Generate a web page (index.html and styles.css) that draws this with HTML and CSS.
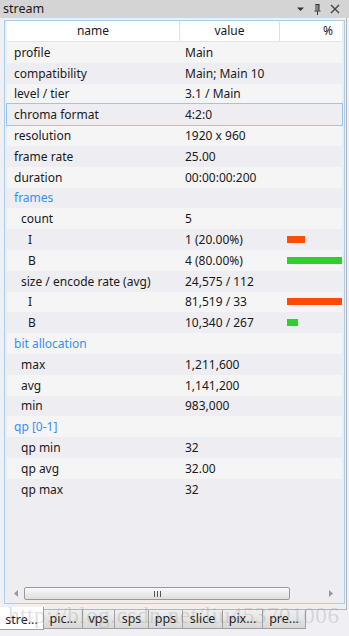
FILE: index.html
```html
<!DOCTYPE html>
<html lang="en">
  <head>
    <meta charset="UTF-8" />
    <title>stream</title>
    <link rel="stylesheet" href="styles.css">
  </head>
  <body>
    <div class="titlebar">
      <span class="title">stream</span>
      <div class="tools">
        <svg width="9" height="6" viewBox="0 0 9 6"><path d="M1 1.5h7L4.5 5z" fill="#333"/></svg>
        <svg width="7" height="11" viewBox="0 0 7 11"><path d="M1.5 0.5h4M2 0.5v6M5 0.5v6M0.5 7h6M3.5 7v4" stroke="#333" fill="none"/><path d="M4 1v5.5" stroke="#333"/></svg>
        <svg width="10" height="10" viewBox="0 0 10 10"><path d="M1 1l8 8M9 1l-8 8" stroke="#444" stroke-width="1.4"/></svg>
      </div>
    </div>

    <div class="pane">
      <div class="view">
        <div class="head">
          <div class="hname">name</div>
          <div class="hvalue">value</div>
          <div class="hpct">%</div>
        </div>

        <div class="rows">
          <div class="row"><div class="n">profile</div><div class="v">Main</div><div class="p"></div></div>
          <div class="row"><div class="n">compatibility</div><div class="v">Main; Main 10</div><div class="p"></div></div>
          <div class="row"><div class="n">level / tier</div><div class="v">3.1 / Main</div><div class="p"></div></div>
          <div class="row selected"><div class="n">chroma format</div><div class="v">4:2:0</div><div class="p"></div></div>
          <div class="row"><div class="n">resolution</div><div class="v">1920 x 960</div><div class="p"></div></div>
          <div class="row"><div class="n">frame rate</div><div class="v">25.00</div><div class="p"></div></div>
          <div class="row"><div class="n">duration</div><div class="v">00:00:00:200</div><div class="p"></div></div>
          <div class="row group"><div class="n">frames</div><div class="v"></div><div class="p"></div></div>
          <div class="row"><div class="n l1">count</div><div class="v">5</div><div class="p"></div></div>
          <div class="row"><div class="n l2">I</div><div class="v">1 (20.00%)</div><div class="p"><span class="bar red" style="width: 18px"></span></div></div>
          <div class="row"><div class="n l2">B</div><div class="v">4 (80.00%)</div><div class="p"><span class="bar green" style="width: 56px"></span></div></div>
          <div class="row"><div class="n l1">size / encode rate (avg)</div><div class="v">24,575 / 112</div><div class="p"></div></div>
          <div class="row"><div class="n l2">I</div><div class="v">81,519 / 33</div><div class="p"><span class="bar red" style="width: 56px"></span></div></div>
          <div class="row"><div class="n l2">B</div><div class="v">10,340 / 267</div><div class="p"><span class="bar green" style="width: 11px"></span></div></div>
          <div class="row group"><div class="n">bit allocation</div><div class="v"></div><div class="p"></div></div>
          <div class="row"><div class="n l1">max</div><div class="v">1,211,600</div><div class="p"></div></div>
          <div class="row"><div class="n l1">avg</div><div class="v">1,141,200</div><div class="p"></div></div>
          <div class="row"><div class="n l1">min</div><div class="v">983,000</div><div class="p"></div></div>
          <div class="row group"><div class="n">qp [0-1]</div><div class="v"></div><div class="p"></div></div>
          <div class="row"><div class="n l1">qp min</div><div class="v">32</div><div class="p"></div></div>
          <div class="row"><div class="n l1">qp avg</div><div class="v">32.00</div><div class="p"></div></div>
          <div class="row"><div class="n l1">qp max</div><div class="v">32</div><div class="p"></div></div>
        </div>

        <div class="hscroll">
          <svg class="arrow" width="4" height="7" viewBox="0 0 4 7"><path d="M4 0v7L0 3.5z" fill="#999"/></svg>
          <div class="thumb"><span class="grip"></span><span class="grip"></span><span class="grip"></span></div>
          <svg class="arrow" width="4" height="7" viewBox="0 0 4 7"><path d="M0 0v7l4-3.5z" fill="#999"/></svg>
        </div>
      </div>
    </div>

    <div class="tabs">
      <div class="tab active">stre...</div>
      <div class="tab w39">pic...</div>
      <div class="tab w32">vps</div>
      <div class="tab w34">sps</div>
      <div class="tab w34">pps</div>
      <div class="tab w40">slice</div>
      <div class="tab w40">pix...</div>
      <div class="tab w43">pre...</div>
    </div>

    <div class="watermark">http://blog.csdn.net/liu453701006</div>
  </body>
</html>
```

FILE: styles.css
```css
body {
  margin: 0;
  width: 349px;
  height: 636px;
  background-color: #f0eff4;
  font-family: 'Noto Sans', 'Open Sans', sans-serif;
  font-size: 12px;
  color: #1a1a1a;
  position: relative;
  overflow: hidden;
}
.titlebar {
  height: 18px;
  background-color: #d4d4d4;
  display: flex;
  align-items: center;
  justify-content: space-between;
  padding: 0 9px 0 3px;
}
.title {
  font-size: 12.5px;
  line-height: 18px;
}
.tools {
  display: flex;
  align-items: center;
  gap: 9px;
}
.pane {
  width: 347px;
  height: 592px;
  padding: 2px 2px 0 4px;
  box-sizing: border-box;
  border-right: 1px solid #b4b4b4;
  border-bottom: 1px solid #b4b4b4;
}
.view {
  width: 341px;
  height: 584px;
  box-sizing: border-box;
  border: 1px solid #a9cdeb;
  padding: 0 2px;
  background-color: #eeedf2;
  display: flex;
  flex-direction: column;
}
.head {
  display: flex;
  height: 20px;
  background-color: #fff;
  border-bottom: 1px solid #e3e3e3;
  line-height: 20px;
}
.hname {
  width: 172px;
  text-align: center;
  border-right: 1px solid #e0e0e0;
}
.hvalue {
  width: 99px;
  text-align: center;
  border-right: 1px solid #e0e0e0;
}
.hpct {
  flex: 1;
  text-align: right;
  padding-right: 9px;
}
.rows {
  flex: 1;
}
.row {
  display: flex;
  align-items: center;
  height: 20.8px;
}
.row:nth-child(odd) {
  background-color: #f5f5f6;
}
.row.selected {
  outline: 1px solid #99c8ee;
  outline-offset: 0;
}
.n {
  width: 166px;
  padding-left: 7px;
  white-space: nowrap;
}
.n.l1 {
  padding-left: 14px;
  width: 159px;
}
.n.l2 {
  padding-left: 21px;
  width: 152px;
}
.group .n {
  color: #3b8ef5;
}
.v {
  width: 95px;
  padding-left: 5px;
  white-space: nowrap;
}
.p {
  flex: 1;
  padding-left: 7px;
  display: flex;
  overflow: hidden;
}
.bar {
  display: block;
  height: 7px;
  flex-shrink: 0;
}
.bar.red {
  background-color: #ff4a0a;
}
.bar.green {
  background-color: #33cc33;
}
.hscroll {
  height: 17px;
  margin-bottom: 1px;
  display: flex;
  align-items: center;
  padding: 0 9px 0 7px;
  gap: 6px;
}
.hscroll .arrow {
  flex-shrink: 0;
}
.thumb {
  width: 266px;
  height: 13px;
  box-sizing: border-box;
  border: 1px solid #9a9a9a;
  border-radius: 2px;
  background: linear-gradient(#fafafa, #dedede);
  display: flex;
  justify-content: center;
  align-items: center;
  gap: 2px;
  margin-right: auto;
}
.grip {
  width: 1px;
  height: 6px;
  background-color: #555;
}
.tabs {
  display: flex;
  align-items: flex-start;
  height: 27px;
}
.tab {
  height: 19px;
  box-sizing: border-box;
  border: 1px solid #a0a0a0;
  border-top: none;
  border-left: none;
  background: linear-gradient(#f0f0f0, #d8d8d8);
  font-size: 12.5px;
  line-height: 18px;
  text-align: center;
}
.tab.active {
  width: 44px;
  height: 23px;
  margin-top: -3px;
  background: #fff;
  line-height: 25px;
}
.w32 { width: 32px; }
.w34 { width: 34px; }
.w39 { width: 39px; }
.w40 { width: 40px; }
.w43 { width: 43px; }
.watermark {
  position: absolute;
  left: 8px;
  top: 603px;
  font-family: 'Liberation Serif', serif;
  font-size: 23px;
  letter-spacing: 0.6px;
  color: rgba(150, 150, 150, 0.3);
  white-space: nowrap;
  pointer-events: none;
}
```
